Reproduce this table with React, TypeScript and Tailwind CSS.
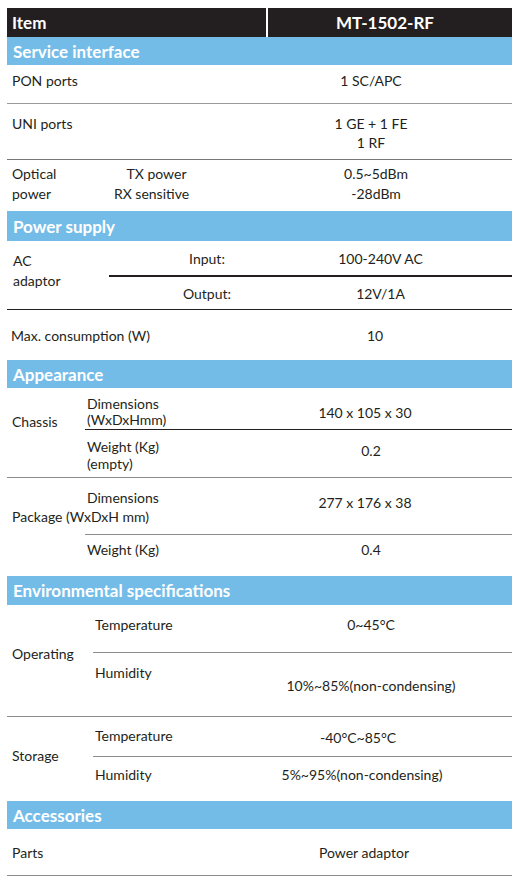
const font = { fontFamily: 'Lato, "Open Sans", sans-serif' };

function Bar({ title, h }: { title: string; h: string }) {
  return (
    <div className={`${h} bg-[#74bce8] flex items-center pl-[6px] text-white font-bold text-[17px] leading-none`}>
      {title}
    </div>
  );
}

export default function App() {
  return (
    <div className="bg-white w-[522px] h-[890px] pt-[8px] pl-[7px] text-[#231f20] text-[14px]" style={font}>
      <div className="w-[505px]">
        {/* Header */}
        <div className="h-[29px] bg-[#231f20] flex text-white font-bold text-[17px]">
          <div className="w-[259px] flex items-center pl-[5px]">Item</div>
          <div className="w-[2px] bg-white" />
          <div className="flex-1 flex items-center justify-center pr-[10px]">MT-1502-RF</div>
        </div>

        {/* Service interface */}
        <Bar title="Service interface" h="h-[28px]" />
        <div className="h-[39px] flex items-start pt-[7px] leading-[18px] border-b border-[#9a9a9a]">
          <div className="w-[223px] pl-[5px]">PON ports</div>
          <div className="flex-1 text-center">1 SC/APC</div>
        </div>
        <div className="h-[56px] flex items-start pt-[10px] leading-[19px] border-b border-[#777]">
          <div className="w-[223px] pl-[5px]">UNI ports</div>
          <div className="flex-1 text-center">
            <div>1 GE + 1 FE</div>
            <div>1 RF</div>
          </div>
        </div>
        <div className="h-[51px] flex items-start pt-[4px] leading-[20px]">
          <div className="w-[86px] pl-[5px]">
            <div>Optical</div>
            <div>power</div>
          </div>
          <div className="w-[137px] text-center pr-[20px]">
            <div className="pl-[10px]">TX power</div>
            <div>RX sensitive</div>
          </div>
          <div className="flex-1 text-center pl-[10px]">
            <div>0.5~5dBm</div>
            <div>-28dBm</div>
          </div>
        </div>

        {/* Power supply */}
        <Bar title="Power supply" h="h-[30px]" />
        <div className="flex border-b-[1.5px] border-[#231f20]">
          <div className="w-[102px] pl-[6px] pt-[10px] leading-[20px]">
            <div>AC</div>
            <div>adaptor</div>
          </div>
          <div className="flex-1">
            <div className="h-[36px] flex items-center border-b-2 border-[#231f20]">
              <div className="w-[196px] text-center">Input:</div>
              <div className="flex-1 text-center pr-[56px]">100-240V AC</div>
            </div>
            <div className="h-[32px] flex items-center">
              <div className="w-[196px] text-center">Output:</div>
              <div className="flex-1 text-center pr-[56px]">12V/1A</div>
            </div>
          </div>
        </div>
        <div className="h-[50px] flex items-center">
          <div className="w-[223px] pl-[4px]">Max. consumption (W)</div>
          <div className="flex-1 text-center pl-[8px]">10</div>
        </div>

        {/* Appearance */}
        <Bar title="Appearance" h="h-[28px]" />
        <div className="flex border-b border-[#8c8c8c]">
          <div className="w-[78px] pl-[5px] pt-[25px] leading-[18px]">Chassis</div>
          <div className="flex-1">
            <div className="h-[42px] flex items-start border-b-[1.5px] border-[#231f20]">
              <div className="w-[145px] pl-[2px] pt-[8px] leading-[16px]">
                <div>Dimensions</div>
                <div>(WxDxHmm)</div>
              </div>
              <div className="flex-1 text-center pt-[16px] leading-[18px] pr-[12px]">140 x 105 x 30</div>
            </div>
            <div className="h-[47px] flex items-start">
              <div className="w-[145px] pl-[2px] pt-[8px] leading-[17px]">
                <div>Weight (Kg)</div>
                <div>(empty)</div>
              </div>
              <div className="flex-1 text-center pt-[12px] leading-[18px]">0.2</div>
            </div>
          </div>
        </div>
        <div className="h-[56px] flex items-start">
          <div className="w-[223px] pt-[10px] leading-[19px]">
            <div className="pl-[80px]">Dimensions</div>
            <div className="pl-[5px]">Package (WxDxH mm)</div>
          </div>
          <div className="flex-1 text-center pt-[16px] leading-[18px] pr-[12px]">277 x 176 x 38</div>
        </div>
        <div className="ml-[78px] h-[42px] flex items-start pt-[6px] leading-[18px] border-t border-[#8c8c8c]">
          <div className="w-[145px] pl-[2px]">Weight (Kg)</div>
          <div className="flex-1 text-center">0.4</div>
        </div>

        {/* Environmental */}
        <Bar title="Environmental specifications" h="h-[29px]" />
        <div className="flex border-b border-[#8c8c8c]">
          <div className="w-[86px] pl-[5px] pt-[40px] leading-[18px]">Operating</div>
          <div className="flex-1">
            <div className="h-[48px] flex items-start pt-[11px] leading-[18px] border-b border-[#8c8c8c]">
              <div className="w-[137px] pl-[2px]">Temperature</div>
              <div className="flex-1 text-center">0~45°C</div>
            </div>
            <div className="h-[63px] flex items-start leading-[18px]">
              <div className="w-[137px] pl-[2px] pt-[11px]">Humidity</div>
              <div className="flex-1 text-center pt-[24px]">10%~85%(non-condensing)</div>
            </div>
          </div>
        </div>
        <div className="flex">
          <div className="w-[86px] pl-[5px] pt-[30px] leading-[18px]">Storage</div>
          <div className="flex-1">
            <div className="h-[40px] flex items-start leading-[18px] border-b border-[#8c8c8c]">
              <div className="w-[137px] pl-[2px] pt-[10px]">Temperature</div>
              <div className="flex-1 text-center pt-[12px] pr-[26px]">-40°C~85°C</div>
            </div>
            <div className="h-[44px] flex items-start pt-[9px] leading-[18px]">
              <div className="w-[137px] pl-[2px]">Humidity</div>
              <div className="flex-1 text-center pr-[18px]">5%~95%(non-condensing)</div>
            </div>
          </div>
        </div>

        {/* Accessories */}
        <Bar title="Accessories" h="h-[28px]" />
        <div className="h-[47px] flex items-center border-b border-[#8c8c8c]">
          <div className="w-[223px] pl-[5px]">Parts</div>
          <div className="flex-1 text-center pr-[14px]">Power adaptor</div>
        </div>
      </div>
    </div>
  );
}
